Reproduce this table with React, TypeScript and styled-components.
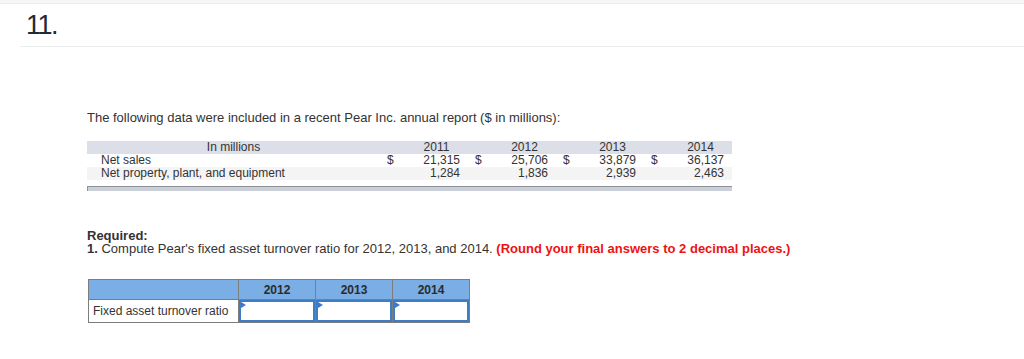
import styled, { createGlobalStyle } from 'styled-components';

const GlobalStyle = createGlobalStyle`
  html, body {
    margin: 0;
    padding: 0;
    background: #ffffff;
  }

  body {
    font-family: 'Liberation Sans', Arial, sans-serif;
    color: #333333;
  }
`;

const years = [
  { year: '2011', sales: '21,315', ppe: '1,284' },
  { year: '2012', sales: '25,706', ppe: '1,836' },
  { year: '2013', sales: '33,879', ppe: '2,939' },
  { year: '2014', sales: '36,137', ppe: '2,463' },
];

const answerYears = ['2012', '2013', '2014'];

const App = () => {
  return (
    <S.Page>
      <GlobalStyle />
      <S.TopStrip />
      <S.QuestionHeader>
        <S.QuestionNumber>11.</S.QuestionNumber>
      </S.QuestionHeader>

      <S.Content>
        <S.Intro>
          The following data were included in a recent Pear Inc. annual report ($ in millions):
        </S.Intro>

        <S.DataTable>
          <colgroup>
            <col style={{ width: 293 }} />
            {years.map((y) => [
              <col key={`d${y.year}`} style={{ width: 25 }} />,
              <col key={`v${y.year}`} style={{ width: 63 }} />,
            ])}
          </colgroup>
          <thead>
            <S.DataHeadRow>
              <S.DataHeadCell>In millions</S.DataHeadCell>
              {years.map((y) => [
                <S.DataHeadCell key={`hd${y.year}`} />,
                <S.DataHeadCell key={`hv${y.year}`}>{y.year}</S.DataHeadCell>,
              ])}
            </S.DataHeadRow>
          </thead>
          <tbody>
            <S.DataRow>
              <S.LabelCell>Net sales</S.LabelCell>
              {years.map((y) => [
                <S.DollarCell key={`sd${y.year}`}>$</S.DollarCell>,
                <S.ValueCell key={`sv${y.year}`}>{y.sales}</S.ValueCell>,
              ])}
            </S.DataRow>
            <S.DataRow $shaded>
              <S.LabelCell>Net property, plant, and equipment</S.LabelCell>
              {years.map((y) => [
                <S.DollarCell key={`pd${y.year}`} />,
                <S.ValueCell key={`pv${y.year}`}>{y.ppe}</S.ValueCell>,
              ])}
            </S.DataRow>
          </tbody>
        </S.DataTable>
        <S.TableFooter />

        <S.Required>
          <S.Bold>Required:</S.Bold>
          <br />
          <S.Bold>1.</S.Bold> Compute Pear's fixed asset turnover ratio for 2012, 2013, and 2014.{' '}
          <S.RedNote>(Round your final answers to 2 decimal places.)</S.RedNote>
        </S.Required>

        <S.AnswerTable>
          <thead>
            <tr>
              <S.AnswerHead $wide />
              {answerYears.map((y) => (
                <S.AnswerHead key={y}>{y}</S.AnswerHead>
              ))}
            </tr>
          </thead>
          <tbody>
            <tr>
              <S.AnswerLabel>Fixed asset turnover ratio</S.AnswerLabel>
              {answerYears.map((y) => (
                <S.InputCell key={y}>
                  <S.Input type="text" aria-label={`ratio ${y}`} />
                  <S.Marker />
                </S.InputCell>
              ))}
            </tr>
          </tbody>
        </S.AnswerTable>
      </S.Content>
    </S.Page>
  );
};

export default App;

const S = {
  Page: styled.div`
    width: 1024px;
    min-height: 359px;
    background: #ffffff;
  `,

  TopStrip: styled.div`
    height: 3px;
    background: #f6f6f6;
    border-bottom: 1px solid #ebebeb;
  `,

  QuestionHeader: styled.div`
    margin-left: 20px;
    height: 42px;
    padding-left: 6px;
    border-bottom: 1px solid #ececec;
    display: flex;
    align-items: center;
  `,

  QuestionNumber: styled.div`
    font-family: 'Liberation Sans', Arial, sans-serif;
    font-size: 27px;
    color: #1f2a36;
    letter-spacing: -1.5px;
    padding-top: 1px;
  `,

  Content: styled.div`
    padding-left: 87px;
    padding-top: 63px;
  `,

  Intro: styled.div`
    font-size: 13px;
    line-height: 16px;
    margin-bottom: 15px;
  `,

  DataTable: styled.table`
    width: 645px;
    border-collapse: collapse;
    table-layout: fixed;
    font-size: 12px;
    line-height: 13px;
  `,

  DataHeadRow: styled.tr`
    background: #dcdfe8;
  `,

  DataHeadCell: styled.th`
    font-weight: normal;
    text-align: center;
    padding: 0;
    height: 12px;
  `,

  DataRow: styled.tr<{ $shaded?: boolean }>`
    background: ${(p) => (p.$shaded ? '#f4f4f4' : '#ffffff')};
  `,

  LabelCell: styled.td`
    padding: 0 0 0 14px;
    height: 13px;
    white-space: nowrap;
  `,

  DollarCell: styled.td`
    padding: 0 0 0 7px;
    text-align: left;
  `,

  ValueCell: styled.td`
    padding: 0 8px 0 0;
    text-align: right;
  `,

  TableFooter: styled.div`
    width: 644px;
    height: 4px;
    margin-top: 6px;
    background: #cbcfd8;
    border-top: 1px solid #8e929b;
    border-left: 1px solid #8e929b;
  `,

  Required: styled.div`
    margin-top: 38px;
    font-size: 13px;
    line-height: 13px;
  `,

  Bold: styled.span`
    font-weight: 700;
  `,

  RedNote: styled.span`
    font-weight: 700;
    color: #ee1111;
  `,

  AnswerTable: styled.table`
    margin-top: 24px;
    margin-left: 1px;
    border-collapse: collapse;
    font-size: 12px;
  `,

  AnswerHead: styled.th<{ $wide?: boolean }>`
    width: ${(p) => (p.$wide ? '149px' : '76px')};
    height: 19px;
    padding: 0;
    background: #7aaee5;
    border: 1px solid #7d7d7d;
    font-weight: 700;
    text-align: center;
    color: #2b2b2b;
  `,

  AnswerLabel: styled.td`
    height: 22px;
    padding: 0 0 0 4px;
    border: 1px solid #7d7d7d;
    white-space: nowrap;
    color: #333333;
  `,

  InputCell: styled.td`
    position: relative;
    padding: 0;
    border: 1px solid #7d7d7d;
  `,

  Input: styled.input`
    display: block;
    box-sizing: border-box;
    width: 100%;
    height: 22px;
    margin: 0;
    border: 2px solid #3e7dc6;
    outline: none;
    background: #ffffff;
  `,

  Marker: styled.span`
    position: absolute;
    left: 2px;
    top: 2px;
    width: 0;
    height: 0;
    border-top: 3px solid transparent;
    border-bottom: 3px solid transparent;
    border-left: 5px solid #3a78cf;
  `,
};
